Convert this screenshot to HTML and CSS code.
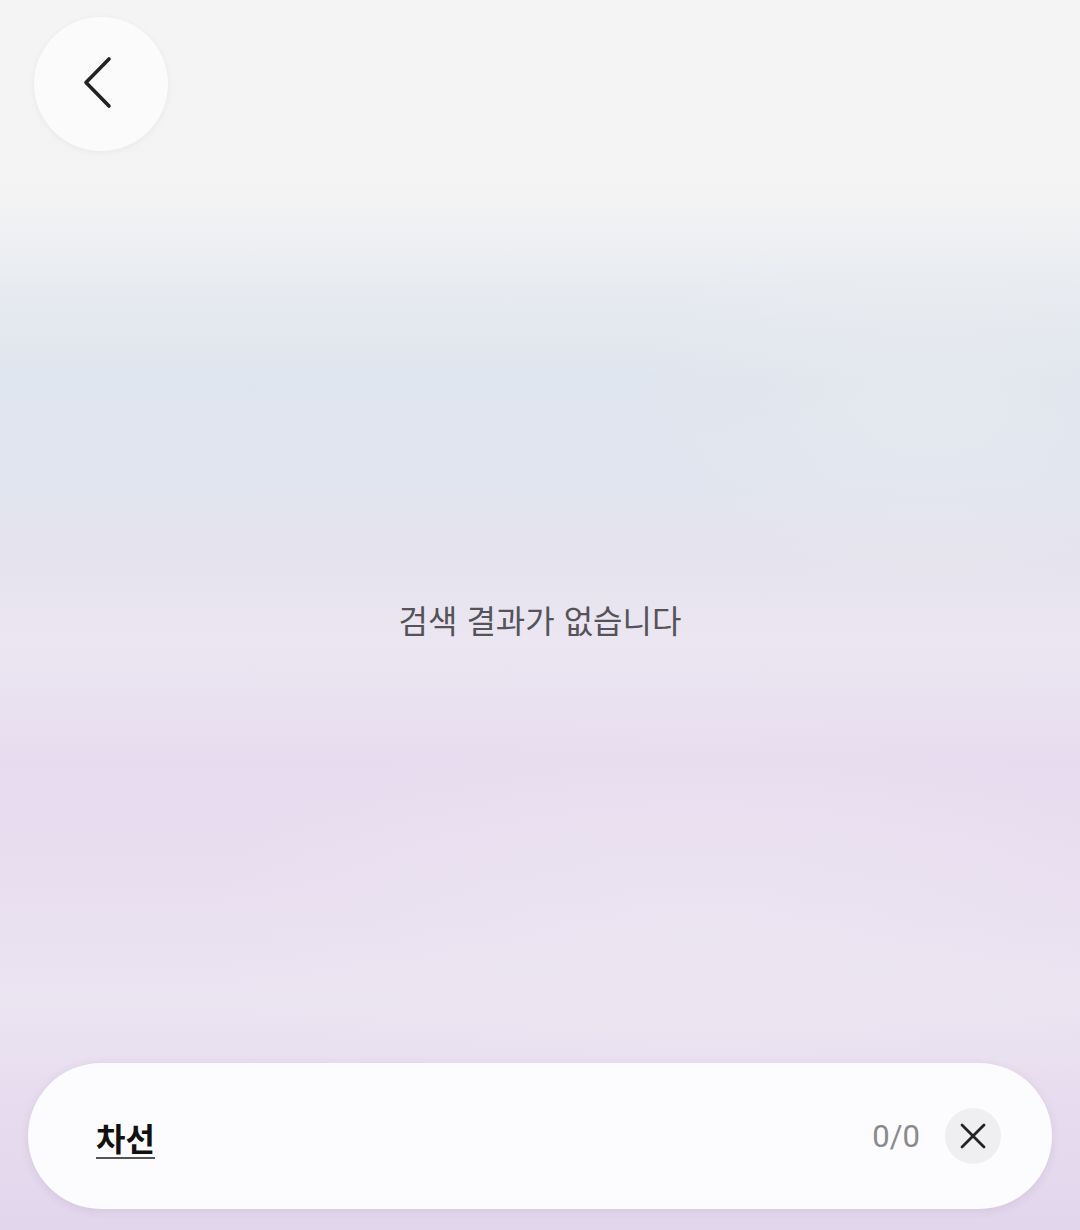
FILE: index.html
```html
<!DOCTYPE html>
<html lang="ko">
<head>
<meta charset="utf-8">
<link rel="stylesheet" href="styles.css">
</head>
<body>
<div class="screen">
  <header class="top">
    <button class="back" aria-label="뒤로">
      <svg width="40" height="60" viewBox="0 0 40 60"><path d="M28 5 L5 28.5 L28 52" fill="none" stroke="#222" stroke-width="3.6" stroke-linecap="round" stroke-linejoin="round"/></svg>
    </button>
  </header>
  <main class="content">
    <p class="empty">검색 결과가 없습니다</p>
  </main>
  <footer class="bar">
    <div class="search">
      <span class="query">차선</span>
      <span class="count">0/0</span>
      <button class="clear" aria-label="지우기">
        <svg width="28" height="28" viewBox="0 0 28 28"><path d="M3 3 L25 25 M25 3 L3 25" fill="none" stroke="#222" stroke-width="2.8" stroke-linecap="round"/></svg>
      </button>
    </div>
  </footer>
</div>
</body>
</html>
```

FILE: styles.css
```css
* { box-sizing: border-box; }
html, body { margin: 0; padding: 0; }
body {
  width: 1080px;
  height: 1230px;
  overflow: hidden;
  font-family: "Noto Sans CJK KR", "Noto Sans", sans-serif;
}
.screen {
  width: 1080px;
  height: 1230px;
  display: flex;
  flex-direction: column;
  background:
    radial-gradient(ellipse 300px 200px at 930px 400px, rgba(238,238,240,0.35), rgba(238,238,240,0)),
    radial-gradient(ellipse 500px 220px at 700px 930px, rgba(238,232,242,0.5), rgba(238,232,242,0)),
    linear-gradient(180deg,
      #f4f4f4 0px,
      #f3f3f4 200px,
      #e7ebf0 290px,
      #dfe5ee 380px,
      #e0e5ef 470px,
      #e6e3ee 560px,
      #ebe6f1 640px,
      #e7dcef 760px,
      #e8def0 880px,
      #ebe4f1 1000px,
      #e7dcef 1100px,
      #e2d6ec 1230px);
}
.top {
  padding: 17px 0 0 34px;
  height: 160px;
}
.back {
  width: 134px;
  height: 134px;
  border-radius: 50%;
  border: none;
  background: #fbfbfc;
  box-shadow: 0 1px 6px rgba(0,0,0,0.05);
  display: flex;
  align-items: center;
  justify-content: center;
  padding: 0;
}
.content {
  flex: 1;
  display: flex;
  justify-content: center;
  padding-top: 437px;
}
.empty {
  margin: 0;
  font-size: 32px;
  line-height: 44px;
  color: #545358;
  height: 44px;
}
.bar {
  padding: 0 28px 21px 28px;
}
.search {
  height: 146px;
  border-radius: 73px;
  background: #fcfbfd;
  box-shadow: 0 2px 10px rgba(80,60,100,0.10);
  display: flex;
  align-items: center;
  padding: 0 51px 0 68px;
}
.query {
  font-size: 32px;
  font-weight: 700;
  color: #111;
  line-height: 40px;
  border-bottom: 2px solid #555;
  padding-bottom: 0;
  margin-top: 4px;
}
.count {
  margin-left: auto;
  font-family: "Roboto", sans-serif;
  font-size: 31px;
  color: #8a898d;
  margin-right: 25px;
}
.clear {
  width: 56px;
  height: 56px;
  border-radius: 50%;
  border: none;
  background: #efeef0;
  display: flex;
  align-items: center;
  justify-content: center;
  padding: 0;
}
```
